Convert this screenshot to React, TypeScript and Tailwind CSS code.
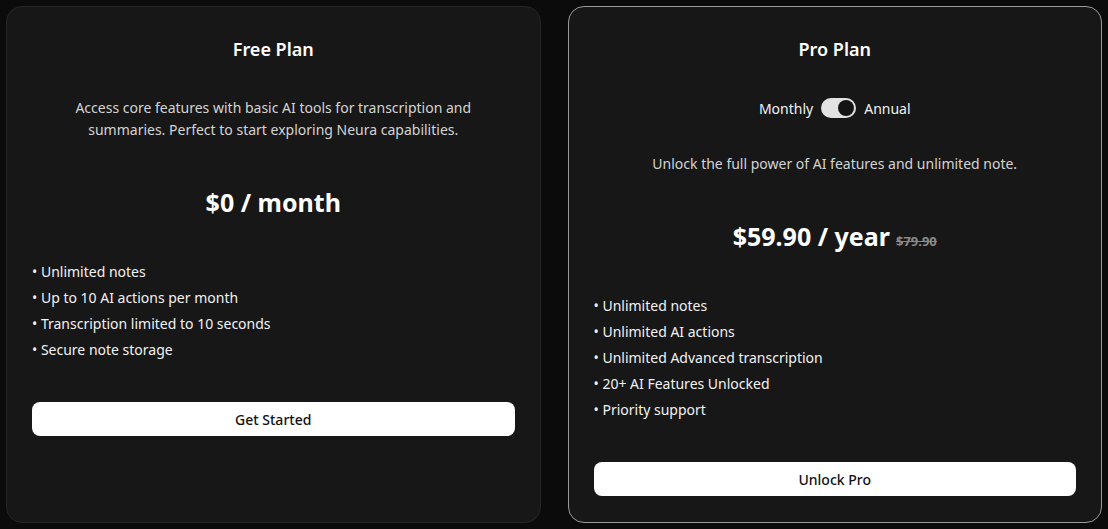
import React, { useState } from "react";

const FONT = { fontFamily: '"Noto Sans", "Open Sans", sans-serif' };

const FREE_FEATURES = [
  "Unlimited notes",
  "Up to 10 AI actions per month",
  "Transcription limited to 10 seconds",
  "Secure note storage",
];

const PRO_FEATURES = [
  "Unlimited notes",
  "Unlimited AI actions",
  "Unlimited Advanced transcription",
  "20+ AI Features Unlocked",
  "Priority support",
];

function FeatureList({ items, className }: { items: string[]; className: string }) {
  return (
    <ul className={"flex flex-col text-[14px] leading-[26px] text-[#f2f2f2] " + className}>
      {items.map((f) => (
        <li key={f}>• {f}</li>
      ))}
    </ul>
  );
}

function Toggle({ on, onChange }: { on: boolean; onChange: (v: boolean) => void }) {
  return (
    <button
      type="button"
      onClick={() => onChange(!on)}
      className="relative h-5 w-[35px] rounded-full bg-[#e2e2e2]"
      aria-label="Billing period"
    >
      <span
        className={
          "absolute top-[2px] h-4 w-4 rounded-full bg-[#141414] ring-1 ring-[#e2e2e2] " +
          (on ? "right-[2px]" : "left-[2px]")
        }
      />
    </button>
  );
}

export default function App() {
  const [annual, setAnnual] = useState(true);

  return (
    <div className="min-h-screen bg-[#0b0b0b] p-[6px]" style={FONT}>
      <div className="grid grid-cols-2 gap-[27px]">
        {/* free */}
        <div className="flex flex-col rounded-2xl border border-[#262626] bg-[#171717] px-[25px] pb-[26px] pt-[28px]">
          <h2 className="mb-[34px] text-center text-[18px] font-semibold leading-7 text-white">Free Plan</h2>
          <p className="mx-auto mb-[43px] max-w-[410px] text-center text-[14px] leading-[22px] text-[#d4d4d4]">
            Access core features with basic AI tools for transcription and summaries. Perfect to start exploring
            Neura capabilities.
          </p>
          <div className="mb-[39px] text-center text-[25px] font-bold leading-9 text-white">$0 / month</div>
          <FeatureList items={FREE_FEATURES} className="mb-[39px]" />
          <button
            type="button"
            className="h-[34px] w-full rounded-lg bg-white text-[14px] font-medium text-[#111]"
          >
            Get Started
          </button>
        </div>

        {/* pro */}
        <div className="flex flex-col rounded-2xl border border-[#9a9a9a] bg-[#171717] px-[25px] pb-[26px] pt-[28px]">
          <h2 className="mb-[33px] text-center text-[18px] font-semibold leading-7 text-white">Pro Plan</h2>
          <div className="mb-[33px] flex h-6 items-center justify-center gap-2 text-[14px] text-[#f2f2f2]">
            <span>Monthly</span>
            <Toggle on={annual} onChange={setAnnual} />
            <span>Annual</span>
          </div>
          <p className="mb-[43px] text-center text-[14px] leading-[22px] text-[#d4d4d4]">
            Unlock the full power of AI features and unlimited note.
          </p>
          <div className="mb-[34px] flex items-baseline justify-center gap-[6px] leading-9">
            <span className="text-[25px] font-bold text-white">{annual ? "$59.90 / year" : "$7.99 / month"}</span>
            {annual && <span className="text-[13px] font-bold text-[#8a8a8a] line-through">$79.90</span>}
          </div>
          <FeatureList items={PRO_FEATURES} className="mb-[39px]" />
          <button
            type="button"
            className="h-[34px] w-full rounded-lg bg-white text-[14px] font-medium text-[#111]"
          >
            Unlock Pro
          </button>
        </div>
      </div>
    </div>
  );
}
